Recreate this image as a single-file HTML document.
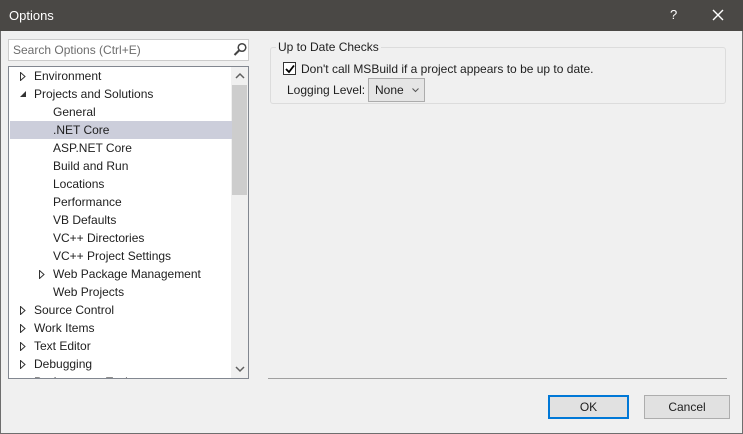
<!DOCTYPE html>
<html><head><style>
*{box-sizing:border-box;margin:0;padding:0}
body{width:743px;height:434px;background:#f0f0f0;font-family:"Liberation Sans",sans-serif;font-size:12px;color:#1e1e1e;position:relative;overflow:hidden}
.abs{position:absolute}
.title{left:0;top:0;width:743px;height:31px;background:#4a4845;color:#fff;font-size:13px}
.row{position:absolute;left:1px;width:222px;height:18px;line-height:18px;white-space:nowrap}
.btn{height:24px;background:#e1e1e1;border:1px solid #adadad;text-align:center;line-height:22px}
</style></head><body>
<div class="abs" style="left:0;top:0;width:743px;height:434px;border:1px solid #6e6e6e"></div>
<div class="abs title"><span class="abs" style="left:9px;top:8px">Options</span><span class="abs" style="left:670px;top:7px">?</span>
<svg class="abs" style="left:712px;top:9px" width="12" height="12"><path d="M1 1L11 11M11 1L1 11" stroke="#fff" stroke-width="1.4"/></svg></div>
<div class="abs" style="left:8px;top:39px;width:241px;height:22px;background:#fff;border:1px solid #ccc;color:#6d6d6d;padding:3px 4px">Search Options (Ctrl+E)
<svg class="abs" style="left:224px;top:2px" width="14" height="14"><circle cx="9" cy="5.5" r="3.8" fill="none" stroke="#444" stroke-width="1.5"/><path d="M6.5 8L1.5 13" stroke="#444" stroke-width="2"/></svg></div>
<div class="abs" style="left:8px;top:66px;width:241px;height:313px;background:#fff;border:1px solid #828790;overflow:hidden">
<div class="abs" style="left:222px;top:0;width:17px;height:311px;background:#f0f0f0"></div>
<div class="abs" style="left:223px;top:18px;width:15px;height:110px;background:#cdcdcd"></div>
<svg class="abs" style="left:226px;top:5px" width="10" height="8"><path d="M1 6L5 2L9 6" fill="none" stroke="#606060" stroke-width="1.5"/></svg>
<svg class="abs" style="left:226px;top:298px" width="10" height="8"><path d="M1 2L5 6L9 2" fill="none" stroke="#606060" stroke-width="1.5"/></svg>
<div class="row" style="top:0"><svg class="abs" style="left:10px;top:5px" width="6" height="9"><path d="M0.5 0.5L5 4.5L0.5 8.5Z" fill="none" stroke="#333"/></svg><span class="abs" style="left:24px">Environment</span></div>
<div class="row" style="top:18px"><svg class="abs" style="left:9px;top:5px" width="8" height="8"><path d="M7 1L7 7L1 7Z" fill="#333"/></svg><span class="abs" style="left:24px">Projects and Solutions</span></div>
<div class="row" style="top:36px"><span class="abs" style="left:43px">General</span></div>
<div class="row" style="top:54px;background:#cccedb"><span class="abs" style="left:43px">.NET Core</span></div>
<div class="row" style="top:72px"><span class="abs" style="left:43px">ASP.NET Core</span></div>
<div class="row" style="top:90px"><span class="abs" style="left:43px">Build and Run</span></div>
<div class="row" style="top:108px"><span class="abs" style="left:43px">Locations</span></div>
<div class="row" style="top:126px"><span class="abs" style="left:43px">Performance</span></div>
<div class="row" style="top:144px"><span class="abs" style="left:43px">VB Defaults</span></div>
<div class="row" style="top:162px"><span class="abs" style="left:43px">VC++ Directories</span></div>
<div class="row" style="top:180px"><span class="abs" style="left:43px">VC++ Project Settings</span></div>
<div class="row" style="top:198px"><svg class="abs" style="left:29px;top:5px" width="6" height="9"><path d="M0.5 0.5L5 4.5L0.5 8.5Z" fill="none" stroke="#333"/></svg><span class="abs" style="left:43px">Web Package Management</span></div>
<div class="row" style="top:216px"><span class="abs" style="left:43px">Web Projects</span></div>
<div class="row" style="top:234px"><svg class="abs" style="left:10px;top:5px" width="6" height="9"><path d="M0.5 0.5L5 4.5L0.5 8.5Z" fill="none" stroke="#333"/></svg><span class="abs" style="left:24px">Source Control</span></div>
<div class="row" style="top:252px"><svg class="abs" style="left:10px;top:5px" width="6" height="9"><path d="M0.5 0.5L5 4.5L0.5 8.5Z" fill="none" stroke="#333"/></svg><span class="abs" style="left:24px">Work Items</span></div>
<div class="row" style="top:270px"><svg class="abs" style="left:10px;top:5px" width="6" height="9"><path d="M0.5 0.5L5 4.5L0.5 8.5Z" fill="none" stroke="#333"/></svg><span class="abs" style="left:24px">Text Editor</span></div>
<div class="row" style="top:288px"><svg class="abs" style="left:10px;top:5px" width="6" height="9"><path d="M0.5 0.5L5 4.5L0.5 8.5Z" fill="none" stroke="#333"/></svg><span class="abs" style="left:24px">Debugging</span></div>
<div class="row" style="top:306px"><span class="abs" style="left:24px">Performance Tools</span></div>
</div>
<div class="abs" style="left:270px;top:47px;width:456px;height:57px;border:1px solid #dcdcdc;border-radius:3px"></div>
<span class="abs" style="left:276px;top:40px;background:#f0f0f0;padding:0 2px">Up to Date Checks</span>
<div class="abs" style="left:283px;top:62px;width:13px;height:13px;border:1px solid #333;background:#fff"><svg class="abs" style="left:1px;top:1px" width="10" height="10"><path d="M1 5L4 8L9 1.5" fill="none" stroke="#000" stroke-width="1.8"/></svg></div>
<span class="abs" style="left:301px;top:62px">Don't call MSBuild if a project appears to be up to date.</span>
<span class="abs" style="left:287px;top:83px">Logging Level:</span>
<div class="abs" style="left:368px;top:78px;width:57px;height:24px;background:#e5e5e5;border:1px solid #acacac;padding:4px 6px">None<svg class="abs" style="left:43px;top:9px" width="7" height="5"><path d="M0.5 0.5L3.5 3.5L6.5 0.5" fill="none" stroke="#555"/></svg></div>
<div class="abs" style="left:268px;top:378px;width:459px;height:1px;background:#a0a0a0"></div>
<div class="abs btn" style="left:548px;top:395px;width:81px;border:2px solid #0078d7;line-height:20px">OK</div>
<div class="abs btn" style="left:644px;top:395px;width:86px">Cancel</div>
</body></html>
